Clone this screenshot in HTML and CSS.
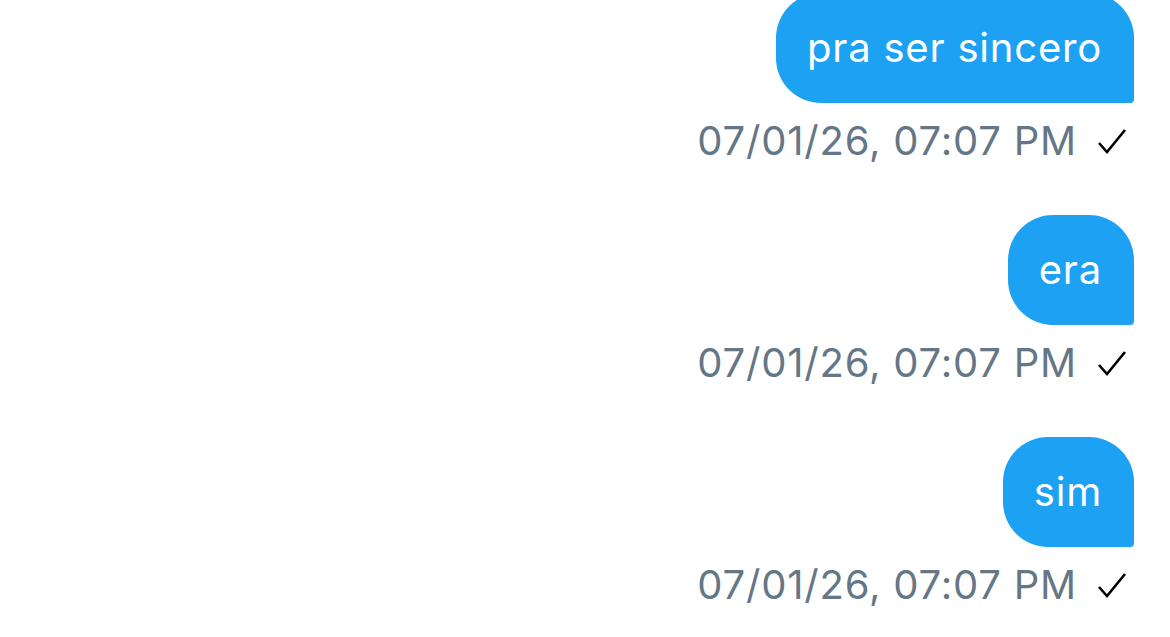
FILE: index.html
```html
<!DOCTYPE html>
<html lang="pt">
  <head>
    <meta charset="UTF-8" />
    <meta name="viewport" content="width=device-width, initial-scale=1.0" />
    <title>Mensagens</title>
    <link rel="stylesheet" href="styles.css">
  </head>

  <body>
    <ul class="messages">
      <li class="message">
        <div class="bubble">pra ser sincero</div>
        <div class="meta">
          <span class="time">07/01/26, 07:07 PM</span>
          <svg class="check" viewBox="0 0 30 26" width="30" height="26">
            <path d="M2 15 L10 24 L28 2" />
          </svg>
        </div>
      </li>
      <li class="message">
        <div class="bubble">era</div>
        <div class="meta">
          <span class="time">07/01/26, 07:07 PM</span>
          <svg class="check" viewBox="0 0 30 26" width="30" height="26">
            <path d="M2 15 L10 24 L28 2" />
          </svg>
        </div>
      </li>
      <li class="message">
        <div class="bubble">sim</div>
        <div class="meta">
          <span class="time">07/01/26, 07:07 PM</span>
          <svg class="check" viewBox="0 0 30 26" width="30" height="26">
            <path d="M2 15 L10 24 L28 2" />
          </svg>
        </div>
      </li>
    </ul>
  </body>
</html>
```

FILE: styles.css
```css
body {
  margin: 0;
  background-color: #ffffff;
  font-family: "Inter", "Noto Sans", sans-serif;
  overflow: hidden;
}

.messages {
  list-style-type: none;
  margin: -7px 0 0 0;
  padding: 0 36px 0 0;
  display: flex;
  flex-direction: column;
  align-items: flex-end;
}

.message {
  display: flex;
  flex-direction: column;
  align-items: flex-end;
  margin-bottom: 49px;
}

.bubble {
  background-color: #1da1f2;
  color: #ffffff;
  font-size: 40px;
  letter-spacing: 0.8px;
  line-height: 50px;
  padding: 30px 32px 30px 31px;
  border-radius: 45px 45px 4px 45px;
}

.meta {
  display: flex;
  align-items: center;
  gap: 20px;
  margin-top: 13px;
  padding-right: 7px;
}

.time {
  color: #657786;
  font-size: 40px;
  letter-spacing: 0.8px;
  line-height: 50px;
}

.check {
  fill: none;
  stroke: #000000;
  stroke-width: 2.6;
}
```
